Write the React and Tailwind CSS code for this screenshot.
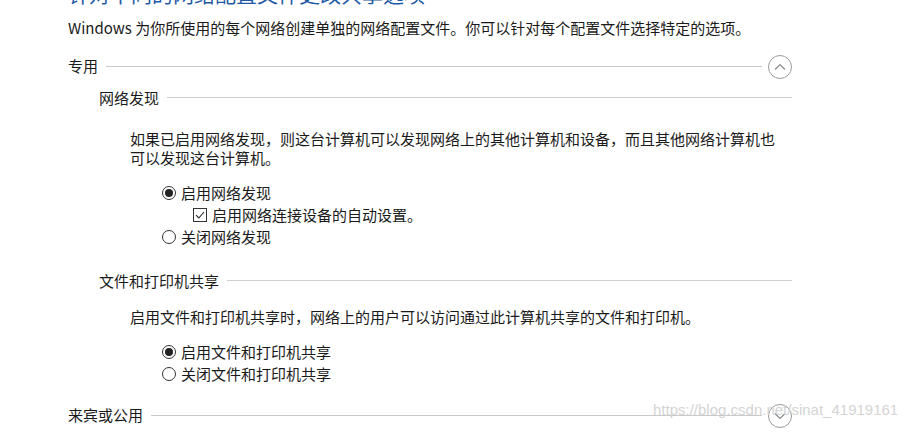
import React from "react";

const font = {
  fontFamily: '"Noto Sans CJK SC", "Microsoft YaHei", sans-serif',
};

function Radio({ checked }) {
  return (
    <span className="w-[14px] h-[14px] rounded-full border border-[#333] flex items-center justify-center shrink-0">
      {checked && <span className="w-[8px] h-[8px] rounded-full bg-[#222]" />}
    </span>
  );
}

function Checkbox() {
  return (
    <span className="w-[14px] h-[14px] border border-[#333] flex items-center justify-center shrink-0">
      <svg width="10" height="10" viewBox="0 0 10 10" fill="none">
        <path d="M1 5.2 L3.8 8 L9 2" stroke="#222" strokeWidth="1.1" />
      </svg>
    </span>
  );
}

function CircleToggle({ up }) {
  return (
    <span className="w-[24px] h-[24px] rounded-full border border-[#9a9a9a] flex items-center justify-center shrink-0 bg-white">
      <svg width="12" height="8" viewBox="0 0 12 8" fill="none">
        <path
          d={up ? "M1 6.5 L6 1.5 L11 6.5" : "M1 1.5 L6 6.5 L11 1.5"}
          stroke="#8a8a8a"
          strokeWidth="1.2"
        />
      </svg>
    </span>
  );
}

function GroupHeader({ label, up, className = "" }) {
  return (
    <div className={`flex items-center h-[20px] ${className}`}>
      <span className="shrink-0">{label}</span>
      <span className="flex-1 h-px bg-[#c9c9c9] ml-2 mr-[6px] mt-[1px]" />
      <span className="mt-[1px]">
        <CircleToggle up={up} />
      </span>
    </div>
  );
}

function SubHeader({ label, className = "" }) {
  return (
    <div className={`flex items-center h-[20px] ${className}`}>
      <span className="shrink-0">{label}</span>
      <span className="flex-1 h-px bg-[#cfcfcf] ml-2 -mt-[2px]" />
    </div>
  );
}

function Option({ checked, label, className = "" }) {
  return (
    <div className={`flex items-center gap-[5px] ${className}`}>
      <Radio checked={checked} />
      <span>{label}</span>
    </div>
  );
}

export default function App() {
  return (
    <div
      className="relative w-[921px] h-[433px] overflow-hidden bg-white text-[#1a1a1a] text-[15px] leading-[20px]"
      style={font}
    >
      <div className="pl-[68px] w-[792px]">
        {/* Title, cut off at the top */}
        <h1 className="text-[21px] leading-[28px] -mt-[21px] h-[28px] text-[#1f5aa6] font-normal whitespace-nowrap">
          针对不同的网络配置文件更改共享选项
        </h1>
        <p className="mt-[11px] whitespace-nowrap">
          Windows 为你所使用的每个网络创建单独的网络配置文件。你可以针对每个配置文件选择特定的选项。
        </p>

        {/* 专用 */}
        <GroupHeader label="专用" up className="mt-[18px]" />

        <div className="pl-[31px]">
          <SubHeader label="网络发现" className="mt-[12px]" />
          <div className="pl-[31px]">
            <p className="mt-[21px] leading-[19px]">
              如果已启用网络发现，则这台计算机可以发现网络上的其他计算机和设备，而且其他网络计算机也
              <br />
              可以发现这台计算机。
            </p>
            <div className="pl-[32px] mt-[15px]">
              <Option checked label="启用网络发现" className="h-[22px]" />
              <div className="flex items-center gap-[5px] h-[22px] pl-[31px]">
                <Checkbox />
                <span>启用网络连接设备的自动设置。</span>
              </div>
              <Option label="关闭网络发现" className="h-[22px]" />
            </div>
          </div>

          <SubHeader label="文件和打印机共享" className="mt-[23px]" />
          <div className="pl-[31px]">
            <p className="mt-[16px]">
              启用文件和打印机共享时，网络上的用户可以访问通过此计算机共享的文件和打印机。
            </p>
            <div className="pl-[32px] mt-[13px]">
              <Option checked label="启用文件和打印机共享" className="h-[23px]" />
              <Option label="关闭文件和打印机共享" className="h-[22px]" />
            </div>
          </div>
        </div>

        {/* 来宾或公用 */}
        <GroupHeader label="来宾或公用" className="mt-[20px]" />
      </div>

      {/* CSDN watermark */}
      <div
        className="absolute left-[653px] top-[400px] text-[15px] leading-[20px] text-[#d4d4d4] whitespace-nowrap"
        style={{ fontFamily: '"Liberation Sans", Arial, sans-serif' }}
      >
        https://blog.csdn.net/sinat_41919161
      </div>
    </div>
  );
}
